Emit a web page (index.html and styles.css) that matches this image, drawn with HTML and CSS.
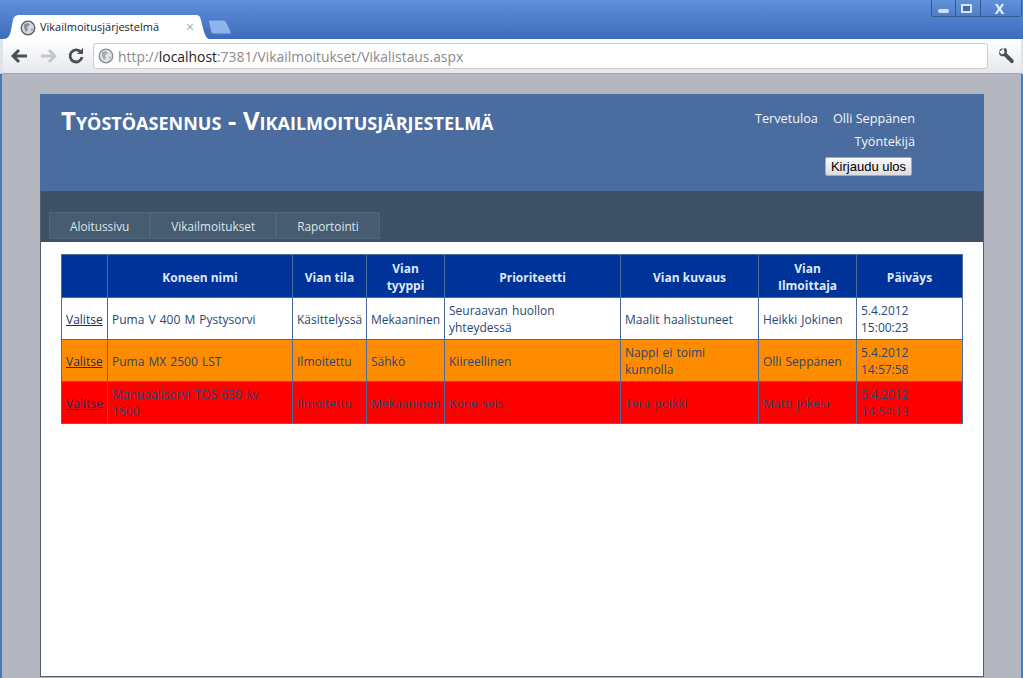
FILE: index.html
```html
<!DOCTYPE html>
<html lang="fi">
<head>
  <meta charset="UTF-8">
  <title>Vikailmoitusjärjestelmä</title>
  <link rel="stylesheet" href="styles.css">
</head>
<body>

  <div class="title-bar">
    <div class="tab">
      <svg class="tab-shape" width="207" height="25" viewBox="0 0 207 25"><path d="M0 25 C5 25 7 22 8 16 L10 6 C11 2 13 1 17 1 L192 1 C196 1 197 2 198 6 L201 18 C203 23 204 25 207 25 Z" fill="#fff"/></svg>
      <svg class="globe" width="16" height="16" viewBox="0 0 16 16"><circle cx="8" cy="8" r="6.8" fill="#d5dae2" stroke="#555d68" stroke-width="1.3"/><path d="M4 4 L8 3 L10 5 L7 7 L8 10 L6 12 L4 8 Z M11 9 L13 8 L12 12 Z" fill="#8b929c"/></svg>
      <span class="tab-title">Vikailmoitusjärjestelmä</span>
      <span class="tab-close">×</span>
    </div>
    <svg class="new-tab" width="26" height="16" viewBox="0 0 26 16"><path d="M1 1 L16 1 C18 1 19 2 20 4 L24 13 C24.500 14.500 24 15 22 15 L7 15 C5 15 4.500 14 4 13 Z" fill="#8db4ec" stroke="#4a78c4"/></svg>
    <div class="window-buttons">
      <span class="win-btn win-min"><i></i></span>
      <span class="win-btn win-max"><i></i></span>
      <span class="win-btn win-close">X</span>
    </div>
  </div>

  <div class="toolbar">
    <svg class="nav-icon" width="18" height="18" viewBox="0 0 18 18"><path d="M8 3 L2 9 L8 15 M3 9 L16 9" fill="none" stroke="#4a4f57" stroke-width="3"/></svg>
    <svg class="nav-icon" width="18" height="18" viewBox="0 0 18 18"><path d="M10 3 L16 9 L10 15 M15 9 L2 9" fill="none" stroke="#c4c8ce" stroke-width="3"/></svg>
    <svg class="nav-icon" width="18" height="18" viewBox="0 0 18 18"><path d="M14 5.500 A6 6 0 1 0 15 10" fill="none" stroke="#4a4f57" stroke-width="2.800"/><path d="M10 7 L16 7 L16 1 Z" fill="#4a4f57"/></svg>
    <div class="address-bar">
      <svg class="globe" width="16" height="16" viewBox="0 0 16 16"><circle cx="8" cy="8" r="6.8" fill="#dfe2e7" stroke="#868c95" stroke-width="1.3"/><path d="M4 4 L8 3 L10 5 L7 7 L8 10 L6 12 L4 8 Z M11 9 L13 8 L12 12 Z" fill="#a8adb5"/></svg>
      <span class="url">http://<b>localhost</b>:7381/Vikailmoitukset/Vikalistaus.aspx</span>
    </div>
    <svg class="wrench" width="18" height="18" viewBox="0 0 18 18"><path d="M2 5 L5 7.500 L7.500 6 L7 2.500 C5 .5 2.500 2 2 5 Z M6 2 C9 0 11 3 9.500 6 L16.500 13 C17.500 15 15.500 17 14 16 L7 9 C4 10 1.500 8 2 5" fill="#4a4f57"/></svg>
  </div>

  <div class="viewport">
    <div class="page">
      <div class="header">
        <h1>Työstöasennus - Vikailmoitusjärjestelmä</h1>
        <div class="login-info">
          <div class="login-line"><span>Tervetuloa</span><span>Olli Seppänen</span></div>
          <div class="login-line">Työntekijä</div>
          <button class="logout" type="button">Kirjaudu ulos</button>
        </div>
      </div>

      <div class="menu">
        <a class="menu-item">Aloitussivu</a>
        <a class="menu-item">Vikailmoitukset</a>
        <a class="menu-item">Raportointi</a>
      </div>

      <div class="main">
        <table class="faults">
          <colgroup>
            <col class="c1"><col class="c2"><col class="c3"><col class="c4">
            <col class="c5"><col class="c6"><col class="c7"><col class="c8">
          </colgroup>
          <thead>
            <tr>
              <th></th>
              <th>Koneen nimi</th>
              <th>Vian tila</th>
              <th>Vian<br>tyyppi</th>
              <th>Prioriteetti</th>
              <th>Vian kuvaus</th>
              <th>Vian<br>Ilmoittaja</th>
              <th>Päiväys</th>
            </tr>
          </thead>
          <tbody>
            <tr>
              <td><a href="#">Valitse</a></td>
              <td>Puma V 400 M Pystysorvi</td>
              <td>Käsittelyssä</td>
              <td>Mekaaninen</td>
              <td>Seuraavan huollon yhteydessä</td>
              <td>Maalit haalistuneet</td>
              <td>Heikki Jokinen</td>
              <td>5.4.2012 15:00:23</td>
            </tr>
            <tr class="row-orange">
              <td><a href="#">Valitse</a></td>
              <td>Puma MX 2500 LST</td>
              <td>Ilmoitettu</td>
              <td>Sähkö</td>
              <td>Kiireellinen</td>
              <td>Nappi ei toimi kunnolla</td>
              <td>Olli Seppänen</td>
              <td>5.4.2012 14:57:58</td>
            </tr>
            <tr class="row-red">
              <td><a href="#">Valitse</a></td>
              <td>Manuaalisorvi TOS 630 kv<br>1500</td>
              <td>Ilmoitettu</td>
              <td>Mekaaninen</td>
              <td>Kone seis</td>
              <td>Terä poikki</td>
              <td>Matti Jokela</td>
              <td>5.4.2012 14:54:13</td>
            </tr>
          </tbody>
        </table>
      </div>
    </div>
  </div>

</body>
</html>
```

FILE: styles.css
```css
html, body {
  height: 100%;
}

body {
  margin: 0;
  overflow: hidden;
  font-family: "Open Sans", "Noto Sans", sans-serif;
  background-color: #b4b7c0;
  display: flex;
  flex-direction: column;
}

/* browser window */
.title-bar {
  height: 39px;
  flex: none;
  display: flex;
  align-items: flex-end;
  padding-left: 3px;
  background: linear-gradient(#5f90da, #3d6cbc);
  position: relative;
}

.tab {
  position: relative;
  width: 207px;
  height: 25px;
  display: flex;
  align-items: center;
  padding-left: 17px;
  box-sizing: border-box;
}

.tab-shape {
  position: absolute;
  left: 0;
  top: 0;
}

.tab .globe {
  position: relative;
  margin-top: 2px;
}

.tab-title {
  position: relative;
  margin-left: 4px;
  font-size: 11px;
  white-space: nowrap;
  color: #1c1c1c;
}

.tab-close {
  position: relative;
  margin-left: 27px;
  font-size: 14px;
  color: #a8a8a8;
}

.new-tab {
  margin-left: -3px;
  margin-bottom: 4px;
}

.window-buttons {
  position: absolute;
  top: 0;
  left: 931px;
  display: flex;
  height: 16px;
  border: 1px solid #34598f;
  border-top: none;
  border-radius: 0 0 3px 3px;
}

.win-btn {
  display: flex;
  align-items: center;
  justify-content: center;
  background: linear-gradient(#6291db, #4f7dc8);
  border-left: 1px solid #34598f;
  color: #e8f0fb;
  font-size: 14px;
  font-weight: bold;
}

.win-min {
  width: 23px;
  border-left: none;
}

.win-min i {
  display: block;
  width: 11px;
  height: 4px;
  margin-top: 5px;
  background: #cfe0f7;
  border-radius: 2px;
}

.win-max {
  width: 25px;
  box-sizing: border-box;
  padding-right: 4px;
}

.win-max i {
  display: block;
  width: 7px;
  height: 5px;
  border: 2px solid #d9e6f8;
  background: #3d6cbc;
}

.win-close {
  width: 41px;
  box-sizing: border-box;
  padding-right: 3px;
}

.toolbar {
  height: 35px;
  flex: none;
  box-sizing: border-box;
  display: flex;
  align-items: center;
  padding: 0 6px 1px 8px;
  background: linear-gradient(#ffffff, #e6e8ec);
  border-left: 3px solid #dfe3ea;
  border-right: 2px solid #dfe3ea;
  border-bottom: 1px solid #a4a7ae;
}

.nav-icon {
  margin-right: 10px;
  flex: none;
}

.address-bar {
  width: 895px;
  height: 26px;
  margin-left: -2px;
  box-sizing: border-box;
  display: flex;
  align-items: center;
  padding-left: 4px;
  background-color: white;
  border: 1px solid #cfcbc4;
  border-radius: 3px;
}

.url {
  margin-left: 4px;
  padding-top: 1px;
  font-size: 13.9px;
  color: #8a8a8a;
}

.url b {
  font-weight: normal;
  color: #222;
}

.wrench {
  margin-left: 9px;
  flex: none;
}

/* page */
.viewport {
  flex: 1;
  min-height: 0;
  padding: 20px 37px 0 38px;
  border-left: 2px solid #4a78c0;
  border-right: 2px solid #4a78c0;
  box-sizing: border-box;
}

.page {
  height: 582px;
  display: flex;
  flex-direction: column;
  background-color: white;
  border-right: 1px solid #555c66;
  border-left: 1px solid #555c66;
  border-bottom: 1px solid #555c66;
}

.header {
  height: 97px;
  flex: none;
  margin: 0 -1px;
  display: flex;
  justify-content: space-between;
  background-color: #4b6c9e;
  color: white;
}

.header h1 {
  margin: 11px 0 0 21px;
  font-family: "Open Sans", sans-serif;
  font-size: 25.7px;
  font-variant: small-caps;
  font-weight: bold;
  line-height: 32px;
  white-space: nowrap;
}

.login-info {
  width: 200px;
  margin: 15px 69px 0 0;
  text-align: right;
  font-size: 12.7px;
  line-height: 18px;
  color: #f2f5fa;
}

.login-line {
  display: flex;
  justify-content: flex-end;
  gap: 15px;
  margin-bottom: 5px;
}

.logout {
  margin: 2px 3px 0 0;
  padding: 0;
  width: 87px;
  height: 19px;
  font-family: "Liberation Sans", sans-serif;
  font-size: 13px;
  white-space: nowrap;
  color: black;
  background: linear-gradient(#fafafa, #dcdcdc);
  border: 1px solid #aaa;
  border-radius: 2px;
}

.menu {
  height: 51px;
  flex: none;
  box-sizing: border-box;
  display: flex;
  align-items: flex-end;
  padding: 0 0 3px 8px;
  background-color: #3f5165;
}

.menu-item {
  box-sizing: border-box;
  height: 27px;
  padding: 0 20px;
  display: flex;
  align-items: center;
  font-size: 11.8px;
  color: #dde4ec;
  background-color: #465c71;
  border: 1px solid #4f6579;
}

.main {
  flex: 1;
  padding: 12px 20px 0;
}

.faults {
  width: 901px;
  table-layout: fixed;
  border-collapse: collapse;
  font-size: 12px;
  line-height: 17px;
  word-spacing: 1px;
  color: #284775;
}

.c1 { width: 46px; }
.c2 { width: 185px; }
.c3 { width: 74px; }
.c4 { width: 78px; }
.c5 { width: 176px; }
.c6 { width: 138px; }
.c7 { width: 98px; }
.c8 { width: 106px; }

.faults th,
.faults td {
  border: 1px solid #4b6c9e;
  padding: 4px 4px 3px;
}

.faults th {
  height: 34px;
  padding: 5px 4px 3px;
  background-color: #003399;
  color: #dfe8f5;
  font-weight: bold;
  text-align: center;
  word-spacing: 0;
}

.faults td {
  height: 34px;
}

.faults a {
  color: #22305f;
}

.row-orange td {
  background-color: #ff8c00;
}

.row-red td {
  background-color: red;
}
```
